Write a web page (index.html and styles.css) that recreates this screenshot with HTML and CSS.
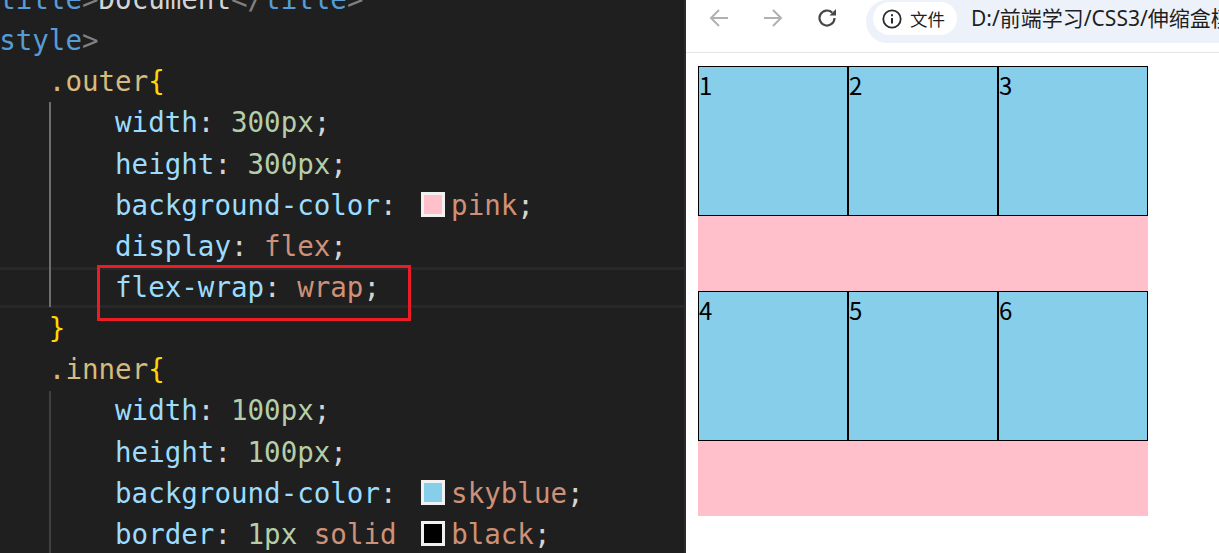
FILE: index.html
```html
<!DOCTYPE html>
<html lang="zh-CN">
<head>
<meta charset="utf-8">
<title>Document</title>
<link rel="stylesheet" href="styles.css">
</head>
<body>
<div class="app">
  <section class="editor">
    <div class="code">
      <div class="line"><span class="tag">&lt;title</span><span class="punct">&gt;</span><span class="plain">Document</span><span class="punct">&lt;/</span><span class="tag">title</span><span class="punct">&gt;</span></div>
      <div class="line"><span class="tag">&lt;style</span><span class="punct">&gt;</span></div>
      <div class="line">    <span class="sel">.outer</span><span class="brace">{</span></div>
      <div class="line">        <span class="prop">width</span><span class="plain">: </span><span class="num">300px</span><span class="plain">;</span></div>
      <div class="line">        <span class="prop">height</span><span class="plain">: </span><span class="num">300px</span><span class="plain">;</span></div>
      <div class="line">        <span class="prop">background-color</span><span class="plain">: </span><span class="swatch swatch-pink"></span><span class="val">pink</span><span class="plain">;</span></div>
      <div class="line">        <span class="prop">display</span><span class="plain">: </span><span class="val">flex</span><span class="plain">;</span></div>
      <div class="line current">        <span class="prop">flex-wrap</span><span class="plain">: </span><span class="val">wrap</span><span class="plain">;</span></div>
      <div class="line">    <span class="brace">}</span></div>
      <div class="line">    <span class="sel">.inner</span><span class="brace">{</span></div>
      <div class="line">        <span class="prop">width</span><span class="plain">: </span><span class="num">100px</span><span class="plain">;</span></div>
      <div class="line">        <span class="prop">height</span><span class="plain">: </span><span class="num">100px</span><span class="plain">;</span></div>
      <div class="line">        <span class="prop">background-color</span><span class="plain">: </span><span class="swatch swatch-blue"></span><span class="val">skyblue</span><span class="plain">;</span></div>
      <div class="line">        <span class="prop">border</span><span class="plain">: </span><span class="num">1px</span> <span class="val">solid</span> <span class="swatch swatch-black"></span><span class="val">black</span><span class="plain">;</span></div>
    </div>
    <div class="guide guide-active"></div>
    <div class="guide guide-idle"></div>
    <div class="callout"></div>
  </section>
  <section class="browser">
    <header class="toolbar">
      <svg class="nav-icon" viewBox="0 0 24 24" fill="none" stroke="#b1b1b1" stroke-width="2"><path d="M21 12H4M12 4 4 12l8 8"/></svg>
      <svg class="nav-icon" viewBox="0 0 24 24" fill="none" stroke="#b1b1b1" stroke-width="2"><path d="M3 12h17M12 4l8 8-8 8"/></svg>
      <svg class="nav-icon nav-reload" viewBox="0 0 24 24" fill="none" stroke="#474747" stroke-width="2.200"><path d="M19.500 12a7.500 7.500 0 1 1-2.300-5.400"/><path d="M21 3v6.500h-6.500z" fill="#474747" stroke="none"/></svg>
      <div class="address">
        <div class="chip">
          <svg class="info" viewBox="0 0 20 20" fill="none" stroke="#2b2b2b"><circle cx="10" cy="10" r="8.700" stroke-width="1.800"/><path d="M10 9v5.500" stroke-width="2"/><path d="M10 5.300v2" stroke-width="2"/></svg>
          <span>文件</span>
        </div>
        <span class="url">D:/前端学习/CSS3/伸缩盒模型/index.html</span>
      </div>
    </header>
    <main class="page">
      <div class="outer">
        <div class="inner">1</div>
        <div class="inner">2</div>
        <div class="inner">3</div>
        <div class="inner">4</div>
        <div class="inner">5</div>
        <div class="inner">6</div>
      </div>
    </main>
  </section>
</div>
</body>
</html>
```
FILE: styles.css
```css
html, body {
  margin: 0;
  padding: 0;
  height: 100%;
  overflow: hidden;
  background: #fff;
}

.app {
  display: flex;
  height: 553px;
  width: 1219px;
}

.editor {
  position: relative;
  flex: 0 0 686px;
  overflow: hidden;
  background: #1f1f1f;
  border-right: 2px solid #2b2b2b;
  box-sizing: border-box;
}

.code {
  margin: -21px 0 0 -17.400px;
  font-family: "DejaVu Sans Mono", "Liberation Mono", monospace;
  font-size: 27.5px;
  line-height: 41.15px;
  color: #d4d4d4;
}

.line {
  height: 41.15px;
  white-space: pre;
}

.current {
  box-shadow: inset 0 3px 0 #282828, inset 0 -3px 0 #282828;
}

.tag { color: #569cd6; }
.punct { color: #808080; }
.plain { color: #d4d4d4; }
.sel { color: #d7ba7d; }
.brace { color: #ffd700; }
.prop { color: #9cdcfe; }
.num { color: #b5cea8; }
.val { color: #ce9178; }

.swatch {
  display: inline-block;
  box-sizing: border-box;
  width: 24px;
  height: 25px;
  margin: 0 6px 0 8px;
  vertical-align: -2px;
  border: 3px solid #f1f1f1;
}
.swatch-pink { background: #ffc0cb; }
.swatch-blue { background: #87ceeb; }
.swatch-black { background: #000; }

.guide {
  position: absolute;
  left: 49px;
  width: 2px;
}
.guide-active {
  top: 102px;
  height: 205px;
  background: #6e6e6e;
}
.guide-idle {
  top: 391px;
  bottom: 0;
  background: #404040;
}

.callout {
  position: absolute;
  left: 97px;
  top: 265px;
  width: 314px;
  height: 56px;
  box-sizing: border-box;
  border: 3px solid #ed1c24;
}

.browser {
  flex: 1;
  min-width: 0;
  display: flex;
  flex-direction: column;
  background: #fff;
}

.toolbar {
  flex: 0 0 53px;
  box-sizing: border-box;
  display: flex;
  align-items: flex-start;
  border-bottom: 1px solid #e6e6e6;
  padding-left: 21px;
  overflow: hidden;
}

.nav-icon {
  flex: none;
  width: 24px;
  height: 24px;
  margin-top: 6px;
  margin-right: 30px;
}
.nav-reload {
  margin-right: 27px;
}

.address {
  flex: 1;
  min-width: 0;
  height: 43px;
  display: flex;
  align-items: flex-start;
  gap: 14px;
  padding: 2px 0 0 7px;
  box-sizing: border-box;
  background: #edf2fa;
  border-radius: 21px 0 0 21px;
  white-space: nowrap;
  overflow: hidden;
}

.chip {
  flex: none;
  display: flex;
  align-items: center;
  gap: 8px;
  height: 33px;
  padding: 0 12px 0 9px;
  box-sizing: border-box;
  background: #fff;
  border-radius: 17px;
  font-family: "Noto Sans CJK SC", sans-serif;
  font-size: 17.5px;
  color: #1f1f1f;
}

.info {
  width: 20px;
  height: 20px;
}

.url {
  font-family: "Noto Sans", "Noto Sans CJK SC", sans-serif;
  font-size: 21px;
  line-height: 33px;
  color: #1f1f1f;
}

.page {
  flex: 1;
  padding: 13px 0 0 12px;
  background: #fff;
}

.outer {
  display: flex;
  flex-wrap: wrap;
  width: 450px;
  height: 450px;
  background: #ffc0cb;
}

.inner {
  box-sizing: border-box;
  width: 150px;
  height: 150px;
  border: 1px solid #000;
  background: #87ceeb;
  font-family: "Noto Sans CJK SC", sans-serif;
  font-size: 24px;
  line-height: 36px;
  color: #000;
}
```
